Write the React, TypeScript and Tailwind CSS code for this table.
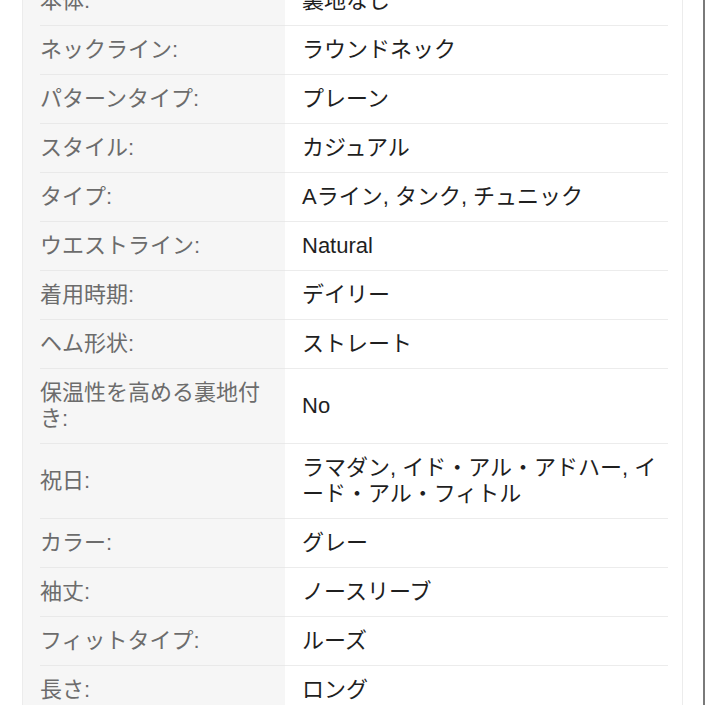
import React from 'react';

// Product spec rows (label / value)
const specs: { label: string; value: string }[] = [
  { label: '本体:', value: '裏地なし' },
  { label: 'ネックライン:', value: 'ラウンドネック' },
  { label: 'パターンタイプ:', value: 'プレーン' },
  { label: 'スタイル:', value: 'カジュアル' },
  { label: 'タイプ:', value: 'Aライン, タンク, チュニック' },
  { label: 'ウエストライン:', value: 'Natural' },
  { label: '着用時期:', value: 'デイリー' },
  { label: 'ヘム形状:', value: 'ストレート' },
  { label: '保温性を高める裏地付き:', value: 'No' },
  { label: '祝日:', value: 'ラマダン, イド・アル・アドハー, イード・アル・フィトル' },
  { label: 'カラー:', value: 'グレー' },
  { label: '袖丈:', value: 'ノースリーブ' },
  { label: 'フィットタイプ:', value: 'ルーズ' },
  { label: '長さ:', value: 'ロング' },
];

const SpecRow: React.FC<{ label: string; value: string }> = ({ label, value }) => (
  <div className="flex">
    <div className="w-[17px] shrink-0 bg-[#f6f6f6]" />
    <div className="w-[245px] shrink-0 bg-[#f6f6f6] border-b border-[#e9e9e9] py-[11px] pr-[16px] flex items-center text-[#6c6c6c]">
      <span>{label}</span>
    </div>
    <div className="flex-1 border-b border-[#ececec] py-[11px] pl-[17px] flex items-center text-[#1f1f1f]">
      <span>{value}</span>
    </div>
    <div className="w-[14px] shrink-0" />
  </div>
);

export default function App() {
  return (
    <div
      className="w-[705px] h-[705px] overflow-hidden bg-white border-r-2 border-[#7a7a7a]"
      style={{ fontFamily: '"Liberation Sans", "Noto Sans CJK JP", sans-serif' }}
    >
      <div className="ml-[22px] w-[661px] -mt-[23px] border-l border-r border-[#ececec] text-[22px] leading-[26px]">
        {specs.map((s, i) => (
          <SpecRow key={i} label={s.label} value={s.value} />
        ))}
      </div>
    </div>
  );
}
